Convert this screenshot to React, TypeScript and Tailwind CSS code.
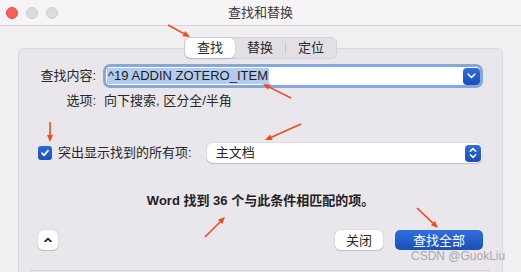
import React from "react";

const FONT = '"Liberation Sans", "Noto Sans CJK SC", sans-serif';

function Arrow({ x1, y1, x2, y2 }: { x1: number; y1: number; x2: number; y2: number }) {
  const dx = x2 - x1;
  const dy = y2 - y1;
  const len = Math.sqrt(dx * dx + dy * dy);
  const ux = dx / len;
  const uy = dy / len;
  const hl = 7;
  const hw = 3;
  const bx = x2 - ux * hl;
  const by = y2 - uy * hl;
  const p1 = `${x2},${y2}`;
  const p2 = `${bx - uy * hw},${by + ux * hw}`;
  const p3 = `${bx + uy * hw},${by - ux * hw}`;
  return (
    <g>
      <line x1={x1} y1={y1} x2={bx} y2={by} stroke="#f04a1c" strokeWidth={1.6} />
      <polygon points={`${p1} ${p2} ${p3}`} fill="#f04a1c" />
    </g>
  );
}

export default function App() {
  return (
    <div
      className="relative w-[521px] h-[272px] overflow-hidden bg-[#f1eff2] flex flex-col text-[13px] text-[#262626]"
      style={{ fontFamily: FONT }}
    >
      {/* Title bar */}
      <div className="h-[26px] shrink-0 grid grid-cols-[1fr_auto_1fr] items-center bg-[#f6f4f7] border-b border-[#d8d6da]">
        <div className="flex items-center gap-[8px] pl-[6px]">
          <div className="w-[12px] h-[12px] rounded-full bg-[#fe5f57] border border-[#e14942]" />
          <div className="w-[12px] h-[12px] rounded-full bg-[#dcdbdd] border border-[#cfcdd0]" />
          <div className="w-[12px] h-[12px] rounded-full bg-[#dcdbdd] border border-[#cfcdd0]" />
        </div>
        <div className="text-[13px] text-[#3a3a3a] leading-none">查找和替换</div>
        <div />
      </div>

      {/* Body */}
      <div className="flex-1 flex flex-col pt-[11px]">
        {/* Tabs */}
        <div className="relative z-10 flex justify-center">
          <div className="flex items-center h-[22px] rounded-[6px] bg-[#e2e0e4] border border-[#d5d3d7] text-[13px] text-[#2a2a2a]">
            <div className="w-[50px] h-[20px] flex items-center justify-center bg-white rounded-[5px] shadow-[0_0_1px_rgba(0,0,0,0.35),0_1px_1px_rgba(0,0,0,0.12)]">
              查找
            </div>
            <div className="w-[50px] h-[20px] flex items-center justify-center">替换</div>
            <div className="w-px h-[12px] bg-[#c9c7cb]" />
            <div className="w-[50px] h-[20px] flex items-center justify-center">定位</div>
          </div>
        </div>

        {/* Panel */}
        <div className="relative flex-1 mx-[18px] mt-[-11px] border border-b-0 border-[#dcdadd] rounded-t-[6px] bg-[#e9e7eb] flex flex-col pt-[15px]">
          {/* Label grid */}
          <div className="grid grid-cols-[77px_1fr] gap-x-[7px] pr-[19px] items-center">
            <div className="text-right leading-[16px]">查找内容:</div>
            <div className="h-[24px] rounded-[7px] border-[3px] border-[#86a7da] bg-white flex items-center pl-[1px] pr-0">
              <div className="flex-1 flex items-center">
                <span className="bg-[#b3cbef] px-[1px] leading-[16px] text-[13px] text-[#1c1c1c]">^19 ADDIN ZOTERO_ITEM</span>
              </div>
              <div className="w-[17px] h-[17px] rounded-[4px] bg-gradient-to-b from-[#2e6ddb] to-[#1a4fb8] flex items-center justify-center">
                <svg width="9" height="6" viewBox="0 0 9 6">
                  <path d="M1.2 1.2 L4.5 4.5 L7.8 1.2" fill="none" stroke="white" strokeWidth="1.6" strokeLinecap="round" strokeLinejoin="round" />
                </svg>
              </div>
            </div>
            <div className="text-right leading-[16px] mt-[5px]">选项:</div>
            <div className="leading-[16px] mt-[5px] pl-[1px]">向下搜索, 区分全/半角</div>
          </div>

          {/* Highlight row */}
          <div className="flex items-center pl-[19px] pr-[20px] mt-[34px] h-[20px]">
            <div className="w-[14px] h-[14px] rounded-[3px] bg-gradient-to-b from-[#2c6adb] to-[#1a50ba] flex items-center justify-center">
              <svg width="10" height="10" viewBox="0 0 10 10">
                <path d="M2 5.2 L4.1 7.3 L8 2.6" fill="none" stroke="white" strokeWidth="1.8" strokeLinecap="round" strokeLinejoin="round" />
              </svg>
            </div>
            <div className="ml-[6px] leading-[16px]">突出显示找到的所有项:</div>
            <div className="ml-[15px] flex-1 h-[20px] rounded-[5px] bg-white shadow-[0_0_1px_rgba(0,0,0,0.4),0_1px_1px_rgba(0,0,0,0.15)] flex items-center pl-[9px] pr-[1px]">
              <span className="flex-1 leading-[16px]">主文档</span>
              <div className="w-[16px] h-[17px] rounded-[4px] bg-gradient-to-b from-[#2e6ddb] to-[#1a4fb8] flex items-center justify-center">
                <svg width="8" height="12" viewBox="0 0 8 12">
                  <path d="M1.3 4.3 L4 1.6 L6.7 4.3 M1.3 7.7 L4 10.4 L6.7 7.7" fill="none" stroke="white" strokeWidth="1.5" strokeLinecap="round" strokeLinejoin="round" />
                </svg>
              </div>
            </div>
          </div>

          {/* Message */}
          <div className="mt-[30px] text-center font-bold leading-[16px] text-[#222]">
            Word 找到 36 个与此条件相匹配的项。
          </div>

          {/* Bottom buttons */}
          <div className="mt-[21px] flex items-center pl-[19px] pr-[19px] h-[20px]">
            <div className="w-[20px] h-[20px] rounded-[5px] bg-white shadow-[0_0_1px_rgba(0,0,0,0.4),0_1px_1px_rgba(0,0,0,0.15)] flex items-center justify-center">
              <svg width="8" height="6" viewBox="0 0 8 6">
                <path d="M1.2 4.4 L4 1.6 L6.8 4.4" fill="none" stroke="#1e1e1e" strokeWidth="1.7" strokeLinecap="round" strokeLinejoin="round" />
              </svg>
            </div>
            <div className="flex-1" />
            <div className="w-[48px] h-[20px] rounded-[5px] bg-white shadow-[0_0_1px_rgba(0,0,0,0.4),0_1px_1px_rgba(0,0,0,0.15)] flex items-center justify-center leading-none">
              关闭
            </div>
            <div className="ml-[12px] w-[88px] h-[20px] rounded-[5px] bg-gradient-to-b from-[#2f6fde] to-[#1a4fb6] text-white flex items-center justify-center leading-none">
              查找全部
            </div>
          </div>

          <div className="mt-[20px] ml-[11px] mr-[12px] h-px bg-[#d3d1d5]" />
        </div>
      </div>

      {/* Watermark */}
      <div className="absolute left-[411px] top-[249px] text-[12px] leading-[14px] text-[#a9a8ab]">
        CSDN @GuokLiu
      </div>

      {/* Annotation arrows */}
      <svg className="absolute inset-0 pointer-events-none" width="521" height="272">
        <Arrow x1={168} y1={25} x2={190} y2={37} />
        <Arrow x1={291} y1={98} x2={263} y2={84} />
        <Arrow x1={50} y1={122} x2={50} y2={142} />
        <Arrow x1={301} y1={124} x2={265} y2={140} />
        <Arrow x1={205} y1={237} x2={225} y2={217} />
        <Arrow x1={417} y1={208} x2={438} y2={228} />
      </svg>
    </div>
  );
}
